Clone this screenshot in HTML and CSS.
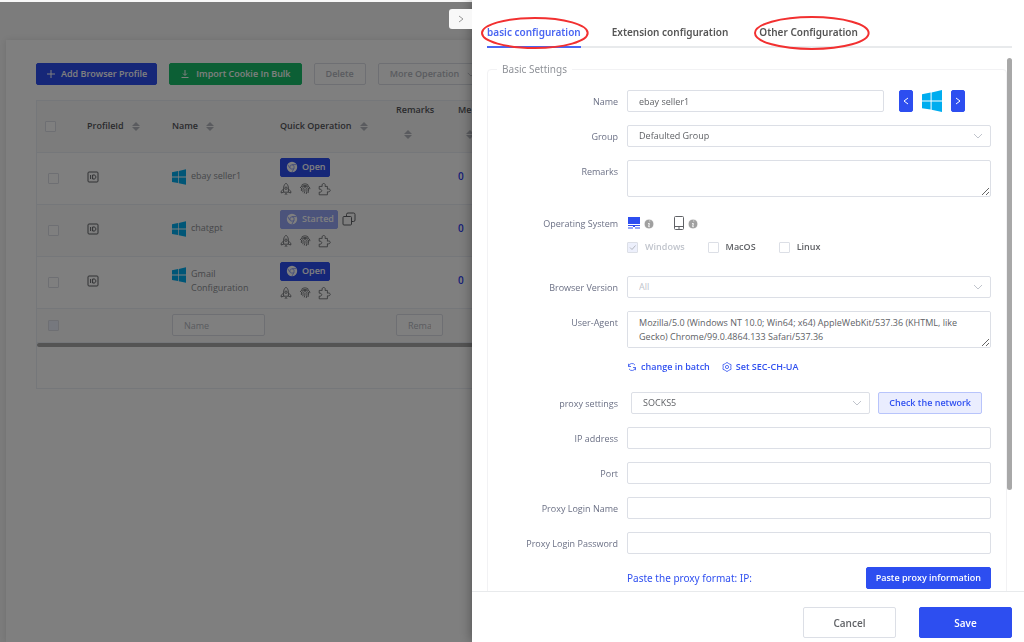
FILE: index.html
```html
<!DOCTYPE html>
<html lang="en">
<head>
  <meta charset="UTF-8">
  <title>Browser Profiles</title>
  <meta name="viewport" content="width=device-width, initial-scale=1.0">
  <link rel="stylesheet" href="styles.css">
</head>
<body>

  <!-- Shared icons -->
  <svg class="sprite" aria-hidden="true">
    <symbol id="windows" viewBox="0 0 20 22">
      <path d="M0 4.2 8.6 2.6V10.4H0zM9.6 2.4 20 0V10.4H9.6zM0 11.6H8.6V19.6L0 18.2zM9.6 11.6H20V22L9.6 19.8z"/>
    </symbol>
    <symbol id="chrome" viewBox="0 0 12 12">
      <circle cx="6" cy="6" r="5.2"/>
      <path class="ring" d="M6 3.6h4.4M3.8 7.200 1.800 3.600M8.200 7.200 6 11"/>
      <circle class="ring" cx="6" cy="6" r="2.2"/>
    </symbol>
    <symbol id="rocket" viewBox="0 0 12 14">
      <path d="M6 1.2C4 2.8 3.6 4.600 3.600 6.400V10.200H8.400V6.400C8.400 4.600 8 2.800 6 1.200zM3.600 7 1.200 9.200V11L3.600 10.200M8.400 7 10.800 9.200V11L8.400 10.200M5 12.800 6 11.200 7 12.800"/>
      <circle cx="6" cy="6.200" r="1.200"/>
    </symbol>
    <symbol id="finger" viewBox="0 0 12 14">
      <path d="M2.400 3.400C4.200 1.400 7.800 1.400 9.600 3.400M1.200 6C2 2.800 10 2.600 10.800 6V7.200M2.400 9V7C2.600 3.600 9.400 3.600 9.600 7 9.600 8.600 9.400 10 9 11M3.800 10.200C4.200 9 4 8.200 4 7.200 4.200 5.200 7.800 5.200 8 7.200 8 9 7.800 10.400 7.200 12M5.200 11.400C5.800 10 6 8.800 6 7"/>
    </symbol>
    <symbol id="puzzle" viewBox="0 0 14 14">
      <path d="M1.200 4.400H4.200C3 1 7.600 .4 7.200 3.400L7 4.400H9.400V7.200C13.200 6 13.200 10.600 9.400 9.800V12.800H1.200V10.200C4.600 10.600 4.600 6.800 1.200 7.200z"/>
    </symbol>
    <symbol id="idcard" viewBox="0 0 12 12">
      <rect x="1" y="1" width="10" height="10" rx="1"/>
      <path d="M3.600 4v4M5.600 4v4M5.600 4H7C9.400 4 9.400 8 7 8H5.600"/>
    </symbol>
    <symbol id="down" viewBox="0 0 10 6">
      <path d="M1 1 5 5 9 1"/>
    </symbol>
    <symbol id="info" viewBox="0 0 10 10">
      <circle cx="5" cy="5" r="5"/>
      <path d="M5.400 2h.8M4.200 4.500H5.300L4.700 7.700H5.700"/>
    </symbol>
  </svg>

  <!-- Profile list -->
  <main class="page">
    <section class="card">
      <div class="toolbar">
        <button class="btn primary">
          <svg class="line" width="10" height="10" viewBox="0 0 10 10"><path d="M5 1v8M1 5h8"/></svg>
          Add Browser Profile
        </button>
        <button class="btn success">
          <svg class="line" width="10" height="10" viewBox="0 0 10 10"><path d="M5 1v5M3 4.500 5 6.500 7 4.500M1.500 8.500h7"/></svg>
          Import Cookie In Bulk
        </button>
        <button class="btn plain" disabled>Delete</button>
        <button class="btn plain" disabled>More Operation
          <svg class="line more" width="8" height="5"><use href="#down"/></svg>
        </button>
      </div>

      <div class="table-box">
        <table>
          <colgroup>
            <col class="c-check"><col class="c-id"><col class="c-name"><col class="c-quick"><col class="c-remarks"><col>
          </colgroup>
          <thead>
            <tr>
              <th><input type="checkbox" aria-label="Select all"></th>
              <th>ProfileId <span class="sort"></span></th>
              <th>Name <span class="sort"></span></th>
              <th>Quick Operation <span class="sort"></span></th>
              <th>Remarks <span class="sort below"></span></th>
              <th>Me <span class="sort below"></span></th>
            </tr>
          </thead>
          <tbody>
            <tr>
              <td class="pick"><input type="checkbox" aria-label="Select ebay seller1"></td>
              <td><svg class="line" width="12" height="12"><use href="#idcard"/></svg></td>
              <td><div class="name"><svg class="win" width="14" height="16"><use href="#windows"/></svg><span>ebay seller1</span></div></td>
              <td>
                <div class="launch"><button class="btn primary open"><svg class="chrome" width="12" height="12"><use href="#chrome"/></svg>Open</button></div>
                <div class="tools">
                  <svg class="line" width="12" height="14"><use href="#rocket"/></svg>
                  <svg class="line" width="12" height="14"><use href="#finger"/></svg>
                  <svg class="line" width="14" height="14"><use href="#puzzle"/></svg>
                </div>
              </td>
              <td></td>
              <td><a href="#" class="count">0</a></td>
            </tr>
            <tr class="striped">
              <td class="pick"><input type="checkbox" aria-label="Select chatgpt"></td>
              <td><svg class="line" width="12" height="12"><use href="#idcard"/></svg></td>
              <td><div class="name"><svg class="win" width="14" height="16"><use href="#windows"/></svg><span>chatgpt</span></div></td>
              <td>
                <div class="launch">
                  <button class="btn primary open started"><svg class="chrome" width="12" height="12"><use href="#chrome"/></svg>Started</button>
                  <svg class="line" width="14" height="14" viewBox="0 0 14 14"><path d="M4.500 4V2.500Q4.500 1 6 1H11.500Q13 1 13 2.500V8Q13 9.500 11.500 9.500H10"/><rect x="1" y="4.500" width="8.500" height="8.500" rx="1"/></svg>
                </div>
                <div class="tools">
                  <svg class="line" width="12" height="14"><use href="#rocket"/></svg>
                  <svg class="line" width="12" height="14"><use href="#finger"/></svg>
                  <svg class="line" width="14" height="14"><use href="#puzzle"/></svg>
                </div>
              </td>
              <td></td>
              <td><a href="#" class="count">0</a></td>
            </tr>
            <tr>
              <td class="pick"><input type="checkbox" aria-label="Select Gmail Configuration"></td>
              <td><svg class="line" width="12" height="12"><use href="#idcard"/></svg></td>
              <td><div class="name"><svg class="win" width="14" height="16"><use href="#windows"/></svg><span>Gmail Configuration</span></div></td>
              <td>
                <div class="launch"><button class="btn primary open"><svg class="chrome" width="12" height="12"><use href="#chrome"/></svg>Open</button></div>
                <div class="tools">
                  <svg class="line" width="12" height="14"><use href="#rocket"/></svg>
                  <svg class="line" width="12" height="14"><use href="#finger"/></svg>
                  <svg class="line" width="14" height="14"><use href="#puzzle"/></svg>
                </div>
              </td>
              <td></td>
              <td><a href="#" class="count">0</a></td>
            </tr>
            <tr class="striped filter">
              <td class="pick"><input type="checkbox" aria-label="Filter row" disabled></td>
              <td></td>
              <td><input type="text" placeholder="Name" aria-label="Name filter"></td>
              <td></td>
              <td><input type="text" placeholder="Rema" aria-label="Remarks filter"></td>
              <td></td>
            </tr>
          </tbody>
        </table>
        <div class="hscroll"></div>
      </div>
    </section>
  </main>

  <div class="overlay"></div>

  <!-- Settings drawer -->
  <aside class="drawer">
    <button class="collapse" aria-label="Close panel">
      <svg class="line" width="6" height="8" viewBox="0 0 6 8"><path d="M1 1 5 4 1 7"/></svg>
    </button>

    <nav class="tabs">
      <a href="#" class="active">basic configuration
        <svg class="mark" viewBox="0 0 108 32" preserveAspectRatio="none"><ellipse cx="54" cy="16" rx="53" ry="15"/></svg>
      </a>
      <a href="#">Extension configuration</a>
      <a href="#">Other Configuration
        <svg class="mark wide" viewBox="0 0 116 34" preserveAspectRatio="none"><ellipse cx="58" cy="17" rx="57" ry="16"/></svg>
      </a>
    </nav>

    <div class="body">
      <fieldset>
        <legend>Basic Settings</legend>

        <div class="row">
          <label for="name">Name</label>
          <div class="control name-control">
            <input type="text" id="name" value="ebay seller1">
            <div class="switcher">
              <button class="btn primary step" aria-label="Previous icon"><svg class="line" width="6" height="8" viewBox="0 0 6 8"><path d="M5 1 1 4 5 7"/></svg></button>
              <svg class="win" width="20" height="22"><use href="#windows"/></svg>
              <button class="btn primary step" aria-label="Next icon"><svg class="line" width="6" height="8" viewBox="0 0 6 8"><path d="M1 1 5 4 1 7"/></svg></button>
            </div>
          </div>
        </div>

        <div class="row">
          <label for="group">Group</label>
          <div class="control select">
            <select id="group"><option>Defaulted Group</option></select>
            <svg class="line" width="10" height="6"><use href="#down"/></svg>
          </div>
        </div>

        <div class="row">
          <label for="remarks">Remarks</label>
          <div class="control"><textarea id="remarks"></textarea></div>
        </div>

        <div class="row system">
          <span class="label">Operating System</span>
          <div class="control">
            <div class="devices">
              <svg class="desktop" width="12" height="12" viewBox="0 0 12 12"><path d="M0 0h12v7H0zM0 8h12v1H0zM5 9h2v1H5zM0 10.500h5v1H0zM7 10.500h5v1H7z"/></svg>
              <svg class="info" width="10" height="10"><use href="#info"/></svg>
              <svg class="line phone" width="10" height="14" viewBox="0 0 10 14"><rect x=".5" y=".5" width="9" height="13" rx="1"/><path d="M1 10.500h8M4 12h2"/></svg>
              <svg class="info" width="10" height="10"><use href="#info"/></svg>
            </div>
            <div class="checks">
              <label class="off"><input type="checkbox" checked disabled>Windows</label>
              <label><input type="checkbox">MacOS</label>
              <label><input type="checkbox">Linux</label>
            </div>
          </div>
        </div>

        <div class="row">
          <label for="version">Browser Version</label>
          <div class="control select muted">
            <select id="version"><option>All</option></select>
            <svg class="line" width="10" height="6"><use href="#down"/></svg>
          </div>
        </div>

        <div class="row">
          <label for="agent">User-Agent</label>
          <div class="control">
            <textarea id="agent">Mozilla/5.0 (Windows NT 10.0; Win64; x64) AppleWebKit/537.36 (KHTML, like Gecko) Chrome/99.0.4864.133 Safari/537.36</textarea>
            <div class="links">
              <a href="#"><svg class="line" width="10" height="10" viewBox="0 0 10 10"><path d="M1.500 4.500A3.500 3.500 0 0 1 8 3.200M8.500 5.500A3.500 3.500 0 0 1 2 6.800M1.500 1.800V4.500H4M8.500 8.200V5.500H6"/></svg>change in batch</a>
              <a href="#"><svg class="line" width="10" height="10" viewBox="0 0 10 10"><path d="M3.500 1.500 4 .8H6L6.500 1.500 8 2.300 9 2.600V4L8.700 5 9 6V7.400L8 7.700 6.500 8.500 6 9.200H4L3.500 8.500 2 7.700 1 7.400V6L1.300 5 1 4V2.600L2 2.300z"/><circle cx="5" cy="5" r="1.600"/></svg>Set SEC-CH-UA</a>
            </div>
          </div>
        </div>

        <div class="row">
          <label for="proxy">proxy settings</label>
          <div class="control proxy-control">
            <div class="select">
              <select id="proxy"><option>SOCKS5</option></select>
              <svg class="line" width="10" height="6"><use href="#down"/></svg>
            </div>
            <button class="btn light">Check the network</button>
          </div>
        </div>

        <div class="row">
          <label for="ip">IP address</label>
          <div class="control"><input type="text" id="ip"></div>
        </div>
        <div class="row">
          <label for="port">Port</label>
          <div class="control"><input type="text" id="port"></div>
        </div>
        <div class="row">
          <label for="login">Proxy Login Name</label>
          <div class="control"><input type="text" id="login"></div>
        </div>
        <div class="row">
          <label for="password">Proxy Login Password</label>
          <div class="control"><input type="password" id="password"></div>
        </div>
        <div class="row">
          <span></span>
          <div class="control paste">
            <a href="#">Paste the proxy format: IP:</a>
            <button class="btn primary">Paste proxy information</button>
          </div>
        </div>
      </fieldset>
      <div class="thumb"></div>
    </div>

    <footer>
      <button class="btn big">Cancel</button>
      <button class="btn big primary">Save</button>
    </footer>
  </aside>

</body>
</html>
```
FILE: styles.css
```css
* {
  margin: 0;
  padding: 0;
  box-sizing: border-box;
}

body {
  height: 100vh;
  overflow: hidden;
  font-family: "Open Sans", "Noto Sans", sans-serif;
  font-size: 9px;
  line-height: 14px;
  color: #606266;
  background: #f8f8f8;
}

button, input, select, textarea {
  font: inherit;
  color: inherit;
}

a {
  color: #3050f0;
  text-decoration: none;
}

svg {
  flex: none;
  display: block;
}

.sprite {
  position: absolute;
  width: 0;
  height: 0;
}

.line {
  fill: none;
  stroke: currentColor;
}

.win {
  fill: #00adef;
}

/* Buttons */
.btn {
  display: inline-flex;
  align-items: center;
  justify-content: center;
  gap: 5px;
  height: 22px;
  padding: 0 9px;
  border: 1px solid #dcdfe6;
  border-radius: 2px;
  background: #fff;
  font-weight: 600;
  white-space: nowrap;
  cursor: pointer;
}

.primary {
  background: #2d4ef0;
  border-color: #2d4ef0;
  color: #fff;
}

.success {
  gap: 6px;
  padding: 0 10px;
  background: #19be6b;
  border-color: #19be6b;
  color: #fff;
}

.plain {
  padding: 0 11px;
  color: #b4b7be;
}

.light {
  padding: 0 10px;
  background: #eaedfe;
  border-color: #b8c4fb;
  color: #3050f0;
}

/* Profile list */
.page {
  min-height: 100vh;
  padding: 40px 6px 0;
}

.card {
  min-height: calc(100vh - 40px);
  padding: 23px 30px;
  background: #fff;
  box-shadow: 0 0 6px rgba(0, 0, 0, 0.1);
}

.toolbar {
  display: flex;
  gap: 12px;
  margin-bottom: 15px;
}

.more {
  margin-left: 3px;
}

.table-box {
  padding-bottom: 41px;
  border: 1px solid #ebeef5;
}

table {
  width: 100%;
  table-layout: fixed;
  border-collapse: collapse;
}

.c-check { width: 39px; }
.c-id { width: 85px; }
.c-name { width: 108px; }
.c-quick { width: 116px; }
.c-remarks { width: 62px; }

th, td {
  height: 51px;
  padding: 0 11px;
  border-bottom: 1px solid #ebeef5;
  text-align: left;
}

td {
  height: 52px;
  padding-bottom: 3px;
}

.pick {
  padding-bottom: 0;
}

th {
  padding: 0 0 0 11px;
  background: #f8f8f9;
  color: #55565a;
  font-weight: 600;
}

th:first-child {
  padding-left: 8px;
}

.striped {
  background: #fafafa;
}

.sort {
  display: inline-block;
  margin-left: 6px;
  vertical-align: middle;
}

.sort::before, .sort::after {
  content: "";
  display: block;
  border: 4px solid transparent;
}

.sort::before {
  border-top: 0;
  border-bottom-color: #b4b7be;
  margin-bottom: 1px;
}

.sort::after {
  border-bottom: 0;
  border-top-color: #b4b7be;
}

.below {
  display: block;
  width: 8px;
  margin: 13px 0 10px 8px;
}

input[type="checkbox"] {
  appearance: none;
  display: block;
  flex: none;
  width: 11px;
  height: 11px;
  border: 1px solid #dcdfe6;
  border-radius: 1px;
  background: #fff;
}

input[type="checkbox"]:disabled {
  background: #edf0fc;
}

.name {
  display: flex;
  gap: 5px;
  color: #8c8f94;
}

.launch {
  display: flex;
  align-items: center;
  gap: 4px;
}

.open {
  gap: 4px;
  height: 19px;
  padding: 0 3px 0 5px;
}

.started {
  background: #96a6f7;
  border-color: #96a6f7;
}

.chrome {
  fill: #fff;
}

.ring {
  fill: none;
  stroke: #96a6f7;
}

.tools {
  display: flex;
  gap: 7px;
  margin-top: 5px;
}

.count {
  color: #2d3cf0;
  font-size: 10px;
  font-weight: 600;
}

.filter td {
  height: 34px;
  padding-bottom: 0;
}

.filter input[type="text"] {
  width: 100%;
  height: 24px;
  padding: 0 11px;
}

.filter td:nth-child(3) {
  padding-right: 4px;
}

.filter td:nth-child(5) {
  padding-right: 4px;
}

.hscroll {
  height: 4px;
  border-radius: 2px;
  background: #a8a8a8;
}

.overlay {
  position: fixed;
  inset: 2px 0 0;
  background: rgba(0, 0, 0, 0.5);
}

/* Drawer */
.drawer {
  position: fixed;
  inset: 0 0 0 auto;
  width: calc(54% - 1px);
  display: flex;
  flex-direction: column;
  background: #fff;
  box-shadow: 0 0 12px rgba(0, 0, 0, 0.4);
}

.collapse {
  position: absolute;
  top: 9px;
  right: 100%;
  display: flex;
  align-items: center;
  justify-content: center;
  width: 23px;
  height: 20px;
  border: 0;
  border-radius: 3px 0 0 3px;
  background: #f8f8f8;
  color: #999;
}

.tabs {
  display: flex;
  gap: 31px;
  margin: 20px 12px 10px 15px;
  border-bottom: 2px solid #e8eaec;
  font-family: "Noto Sans", "Open Sans", sans-serif;
  font-size: 10px;
  font-weight: 600;
}

.tabs a {
  position: relative;
  margin-bottom: -2px;
  padding: 5px 0 7px;
  border-bottom: 2px solid transparent;
  color: #555;
}

.tabs .active {
  color: #4a66f2;
  border-color: #4a66f2;
}

.mark {
  position: absolute;
  top: -3px;
  left: -6px;
  width: calc(100% + 14px);
  height: 32px;
  fill: none;
  stroke: #f23030;
  stroke-width: 2;
}

.wide {
  top: -4px;
  left: -5px;
  width: calc(100% + 17px);
  height: 34px;
}

.body {
  position: relative;
  flex: 1;
  min-height: 0;
  overflow: hidden;
  padding: 4px 17px 0 15px;
}

.thumb {
  position: absolute;
  top: 0;
  right: 12px;
  width: 5px;
  height: 81%;
  border-radius: 3px;
  background: #a8a8a8;
}

fieldset {
  min-height: 120%;
  padding: 14px 15px 0 0;
  border: 1px solid #f2f2f4;
  border-radius: 4px;
}

legend {
  margin-left: 9px;
  padding: 0 5px;
  font-family: "Noto Sans", "Open Sans", sans-serif;
  font-size: 10px;
  color: #909399;
}

.row {
  display: grid;
  grid-template-columns: 130px minmax(0, 1fr);
  gap: 9px;
  margin-bottom: 13px;
}

.row > label, .label {
  padding-top: 5px;
  text-align: right;
  color: #6b7085;
}

.body input[type="text"], .body input[type="password"], .filter input[type="text"], select, textarea {
  display: block;
  width: 100%;
  height: 22px;
  padding: 0 11px;
  border: 1px solid #dcdfe6;
  border-radius: 2px;
  background: #fff;
  outline: 0;
}

textarea {
  height: 37px;
  padding: 4px 11px;
  resize: vertical;
}

::placeholder {
  color: #b4b7be;
}

.select {
  position: relative;
}

select {
  appearance: none;
}

.select svg {
  position: absolute;
  top: 8px;
  right: 8px;
  color: #c0c4cc;
}

.muted select {
  color: #c0c4cc;
}

.name-control, .proxy-control, .switcher {
  display: flex;
}

.name-control {
  gap: 15px;
}

.body .name-control input {
  flex: 1;
  min-width: 0;
}

.switcher {
  gap: 9px;
  padding-right: 26px;
}

.step {
  width: 14px;
  padding: 0;
}

.system {
  margin-bottom: 22px;
}

.system .label {
  padding-top: 7px;
}

.devices {
  display: flex;
  align-items: center;
  gap: 4px;
  padding: 6px 1px 0;
}

.desktop {
  fill: #2d4ef0;
}

.info {
  fill: #a0a0a0;
  stroke: #fff;
  margin-top: 2px;
}

.phone {
  margin-left: 16px;
  color: #606266;
}

.checks {
  display: flex;
  gap: 23px;
  margin-top: 10px;
  font-weight: 600;
}

.checks label {
  display: flex;
  align-items: center;
  gap: 7px;
}

.checks .off {
  color: #c0c4cc;
}

.checks input:checked {
  background: #edf0fc url("data:image/svg+xml,%3Csvg xmlns='http://www.w3.org/2000/svg' viewBox='0 0 9 9'%3E%3Cpath d='M2 4.500 4 6.500 7.500 2.500' fill='none' stroke='%23b4b7be'/%3E%3C/svg%3E");
}

.links {
  display: flex;
  gap: 12px;
  padding: 12px 0 5px;
  font-weight: 600;
}

.links a {
  display: flex;
  align-items: center;
  gap: 4px;
}

.links svg, .tools svg {
  stroke-width: 0.8;
}

.proxy-control {
  gap: 8px;
  padding: 0 9px 0 4px;
}

.proxy-control .select {
  flex: 1;
}

.paste {
  display: flex;
  align-items: center;
  justify-content: space-between;
}

.paste a {
  font-family: "Noto Sans", "Open Sans", sans-serif;
  font-size: 10px;
}

footer {
  display: flex;
  justify-content: flex-end;
  gap: 23px;
  padding: 15px 12px 4px;
  border-top: 1px solid #e8eaec;
}

.big {
  width: 93px;
  height: 31px;
  font-size: 10px;
}
```
